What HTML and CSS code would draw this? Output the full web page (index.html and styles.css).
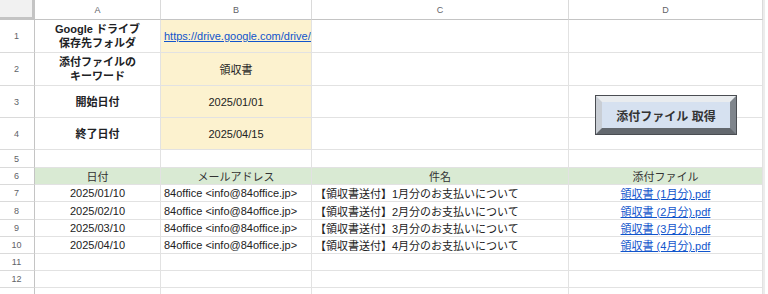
FILE: index.html
```html
<!DOCTYPE html>
<html lang="ja">
<head>
<meta charset="utf-8">
<link rel="stylesheet" href="styles.css">
</head>
<body>
<div class="sheet">
  <div class="grid">
    <div class="corner"></div>
    <div class="colhead">A</div>
    <div class="colhead">B</div>
    <div class="colhead">C</div>
    <div class="colhead">D</div>
    <div class="edge"></div>

    <div class="rowhead">1</div>
    <div class="cell label"><span>Google ドライブ<br>保存先フォルダ</span></div>
    <div class="cell input left link-cell"><a href="#">https://drive.google.com/drive/folders/1AbCdEfGhIjKlMn</a></div>
    <div class="cell"></div>
    <div class="cell"></div>
    <div class="edge"></div>

    <div class="rowhead">2</div>
    <div class="cell label"><span>添付ファイルの<br>キーワード</span></div>
    <div class="cell input">領収書</div>
    <div class="cell"></div>
    <div class="cell"></div>
    <div class="edge"></div>

    <div class="rowhead">3</div>
    <div class="cell label">開始日付</div>
    <div class="cell input">2025/01/01</div>
    <div class="cell"></div>
    <div class="cell"></div>
    <div class="edge"></div>

    <div class="rowhead">4</div>
    <div class="cell label">終了日付</div>
    <div class="cell input">2025/04/15</div>
    <div class="cell"></div>
    <div class="cell"></div>
    <div class="edge"></div>

    <div class="rowhead">5</div>
    <div class="cell"></div>
    <div class="cell"></div>
    <div class="cell"></div>
    <div class="cell"></div>
    <div class="edge"></div>

    <div class="rowhead">6</div>
    <div class="cell th">日付</div>
    <div class="cell th">メールアドレス</div>
    <div class="cell th">件名</div>
    <div class="cell th">添付ファイル</div>
    <div class="edge"></div>

    <div class="rowhead">7</div>
    <div class="cell">2025/01/10</div>
    <div class="cell left">84office &lt;info@84office.jp&gt;</div>
    <div class="cell left">【領収書送付】1月分のお支払いについて</div>
    <div class="cell"><a href="#">領収書 (1月分).pdf</a></div>
    <div class="edge"></div>

    <div class="rowhead">8</div>
    <div class="cell">2025/02/10</div>
    <div class="cell left">84office &lt;info@84office.jp&gt;</div>
    <div class="cell left">【領収書送付】2月分のお支払いについて</div>
    <div class="cell"><a href="#">領収書 (2月分).pdf</a></div>
    <div class="edge"></div>

    <div class="rowhead">9</div>
    <div class="cell">2025/03/10</div>
    <div class="cell left">84office &lt;info@84office.jp&gt;</div>
    <div class="cell left">【領収書送付】3月分のお支払いについて</div>
    <div class="cell"><a href="#">領収書 (3月分).pdf</a></div>
    <div class="edge"></div>

    <div class="rowhead">10</div>
    <div class="cell">2025/04/10</div>
    <div class="cell left">84office &lt;info@84office.jp&gt;</div>
    <div class="cell left">【領収書送付】4月分のお支払いについて</div>
    <div class="cell"><a href="#">領収書 (4月分).pdf</a></div>
    <div class="edge"></div>

    <div class="rowhead">11</div>
    <div class="cell"></div>
    <div class="cell"></div>
    <div class="cell"></div>
    <div class="cell"></div>
    <div class="edge"></div>

    <div class="rowhead">12</div>
    <div class="cell"></div>
    <div class="cell"></div>
    <div class="cell"></div>
    <div class="cell"></div>
    <div class="edge"></div>

    <div class="rowhead"></div>
    <div class="cell"></div>
    <div class="cell"></div>
    <div class="cell"></div>
    <div class="cell"></div>
    <div class="edge"></div>
  </div>
  <button class="fetch-btn" type="button">添付ファイル 取得</button>
</div>
</body>
</html>
```

FILE: styles.css
```css
html, body {
  margin: 0;
  padding: 0;
  background: #ffffff;
}

body {
  font-family: "Liberation Sans", Arial, "Noto Sans CJK JP", sans-serif;
  font-size: 11px;
  color: #222222;
  overflow: hidden;
}

.sheet {
  position: relative;
  width: 768px;
  height: 294px;
  overflow: hidden;
}

.grid {
  display: grid;
  grid-template-columns: 35px 126px 151px 257px 194px 2px;
  grid-template-rows: 20px 33px 33px 32px 32px 18px 17px 17px 18px 17px 17px 17px 17px 20px;
}

.corner {
  background: #f1f1f1;
  border-right: 3px solid #c4c4c4;
  border-bottom: 3px solid #c4c4c4;
}

.colhead {
  display: flex;
  align-items: center;
  justify-content: center;
  font-family: "Liberation Sans", Arial, sans-serif;
  font-size: 9px;
  color: #5f6368;
  border-right: 1px solid #dadada;
  border-bottom: 1px solid #c4c4c4;
  padding-top: 1px;
}

.rowhead {
  display: flex;
  align-items: center;
  justify-content: center;
  font-family: "Liberation Sans", Arial, sans-serif;
  font-size: 9px;
  color: #5f6368;
  border-right: 1px solid #c4c4c4;
  border-bottom: 1px solid #dadada;
  padding-right: 1px;
}

.edge {
  background: #ececec;
}

.cell {
  display: flex;
  align-items: center;
  justify-content: center;
  text-align: center;
  padding: 0 3px;
  border-right: 1px solid #e2e2e2;
  border-bottom: 1px solid #e2e2e2;
  white-space: nowrap;
  overflow: hidden;
  min-width: 0;
}

.cell.left {
  justify-content: flex-start;
  text-align: left;
}

.cell.link-cell {
  padding-right: 0;
}

.label {
  font-weight: bold;
  color: #202124;
  line-height: 14px;
}

.input {
  background: #fcf2cf;
}

.th {
  background: #d9ead3;
  color: #333333;
}

a {
  color: #1155cc;
  text-decoration: underline;
}

.fetch-btn {
  position: absolute;
  left: 596px;
  top: 96px;
  width: 140px;
  height: 38px;
  box-sizing: border-box;
  margin: 0;
  padding: 0;
  background: #d6e1f0;
  border-style: solid;
  border-width: 6px;
  border-color: #e9ecef #7f858c #63686e #c9ced5;
  outline: 1px solid #4a4d52;
  outline-offset: 0;
  font-family: "Liberation Sans", Arial, "Noto Sans CJK JP", sans-serif;
  font-size: 12px;
  font-weight: bold;
  color: #333333;
}
```
